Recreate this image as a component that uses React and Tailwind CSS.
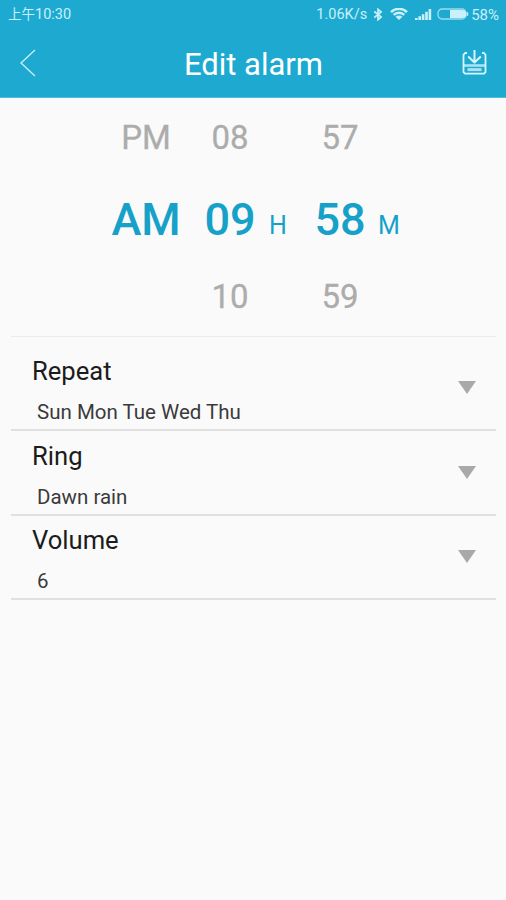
function Bluetooth() {
  return (
    <svg width="10" height="13" viewBox="0 0 10 14" fill="none" stroke="currentColor" strokeWidth="1.8">
      <path d="M1 3.8 8.4 9.6 5 12.6V1.4l3.4 3L1 10.2" />
    </svg>
  );
}

function Wifi() {
  return (
    <svg width="18" height="12" viewBox="0 0 18 12" fill="currentColor">
      <path d="M9 12 5.6 8.8a4.8 4.8 0 0 1 6.8 0z" />
      <path d="M1 4.1a11.4 11.4 0 0 1 16 0M3.7 6.9a7.6 7.6 0 0 1 10.6 0" fill="none" stroke="currentColor" strokeWidth="2.5" />
    </svg>
  );
}

function Signal() {
  return (
    <svg width="17" height="11" viewBox="0 0 17 11" fill="currentColor">
      <path d="M0 9h2.6v2H0zM3.4 7.3h2.6V11H3.4zM6.8 5.2h2.6V11H6.8zM10.2 2.8h2.6V11h-2.6zM13.6 0h2.6v11h-2.6z" />
    </svg>
  );
}

function Battery() {
  return (
    <svg width="32" height="12" viewBox="0 0 32 12">
      <rect x="1" y="1" width="28" height="10" rx="4" fill="none" stroke="currentColor" strokeWidth="1.3" opacity="0.7" />
      <path d="M13 2h12.5a3.5 3.5 0 0 1 0 8H13z" fill="currentColor" />
      <path d="M30 4.3h1.2v3.4H30z" fill="currentColor" />
    </svg>
  );
}

function Header() {
  return (
    <header className="h-[98px] border-b border-[#4fbcdb] bg-[#1eaad0] text-white">
      <div className="flex h-7 items-center justify-between pl-2 pr-[7px] text-[15px] text-[#c9f0fb]">
        <span className="pt-0.5 text-[13.5px]">上午<span className="text-[14.5px]">10:30</span></span>
        <div className="flex items-center">
          <span className="mr-[6px] pt-0.5 text-[14.5px]">1.06K/s</span>
          <Bluetooth />
          <span className="ml-[7px] mr-[7px]"><Wifi /></span>
          <Signal />
          <span className="ml-[5px] mr-[2px]"><Battery /></span>
          <span className="pt-0.5 text-[15px]">58%</span>
        </div>
      </div>
      <div className="grid h-[69px] grid-cols-[80px_1fr_80px] items-center">
        <svg className="ml-[20px]" width="16" height="28" viewBox="0 0 16 28" fill="none" stroke="#c4effb" strokeWidth="1.4">
          <path d="M15 1 1 14l14 13" />
        </svg>
        <h1 className="pl-px pt-[4px] text-center text-[31px] leading-[65px]">Edit alarm</h1>
        <svg className="ml-[36px] -mt-0.5" width="25" height="26" viewBox="0 0 25 26" fill="none" stroke="#d8f6fd" strokeWidth="1.8" strokeLinejoin="round">
          <path d="M5 4H3L1.5 5.8v17.4L3 24.7h19l1.5-1.5V5.8L22 4h-2" />
          <path d="M12.5 1v12M6.2 7.5l6.3 6 6.3-6" strokeWidth="2" />
          <path d="M2 16.5h21" strokeWidth="2.6" opacity=".75" />
          <path d="M5.5 20.6h14" strokeWidth="3" opacity=".75" />
        </svg>
      </div>
    </header>
  );
}

function Wheel({ width, before, value, after }) {
  return (
    <div className={`${width} flex flex-col text-center text-[#acacac]`}>
      <span className="text-[33px] leading-[79px] [-webkit-text-stroke:0.3px_#acacac]">{before}</span>
      <span className="text-[45px] font-medium leading-[85px] text-[#15a1c8]">{value}</span>
      <span className="text-[33px] leading-[69px] [-webkit-text-stroke:0.3px_#acacac]">{after}</span>
    </div>
  );
}

function Unit({ children, className }) {
  return <span className={`${className} mt-[85px] text-[25px] leading-[85px] text-[#15a1c8]`}>{children}</span>;
}

function Row({ title, value, className }) {
  return (
    <section className={`${className} flex items-end justify-between border-b-2 border-[#e0e0e0] pr-[20px]`}>
      <div className="pl-[21px]">
        <h2 className="text-[25.6px] leading-[49px] text-[#1c1c1c]">{title}</h2>
        <p className="pl-[5px] text-[20.5px] leading-[33px] text-[#3a3a3a]">{value}</p>
      </div>
      <svg className="mb-[35px]" width="18" height="13" viewBox="0 0 18 13" fill="#a9a9a9">
        <path d="M0 0h18L9 13z" />
      </svg>
    </section>
  );
}

export default function App() {
  return (
    <main className="h-[900px] w-[506px] overflow-hidden bg-[#fafafa] font-['Roboto','Noto_Sans_CJK_SC',sans-serif]">
      <Header />
      <div className="flex h-[238px] items-start pl-[106px]">
        <Wheel width="w-[80px]" before="PM" value="AM" after="" />
        <Wheel width="ml-[14px] w-[60px]" before="08" value="09" after="10" />
        <Unit className="ml-[9px] w-[18px]">H</Unit>
        <Wheel width="ml-[23px] w-[60px]" before="57" value="58" after="59" />
        <Unit className="ml-[8px]">M</Unit>
      </div>
      <div className="ml-[11px] mr-[10px] border-t border-[#ececec]">
        <Row className="h-[94px]" title="Repeat" value="Sun Mon Tue Wed Thu" />
        <Row className="h-[84.5px]" title="Ring" value="Dawn rain" />
        <Row className="h-[84.5px]" title="Volume" value="6" />
      </div>
    </main>
  );
}
